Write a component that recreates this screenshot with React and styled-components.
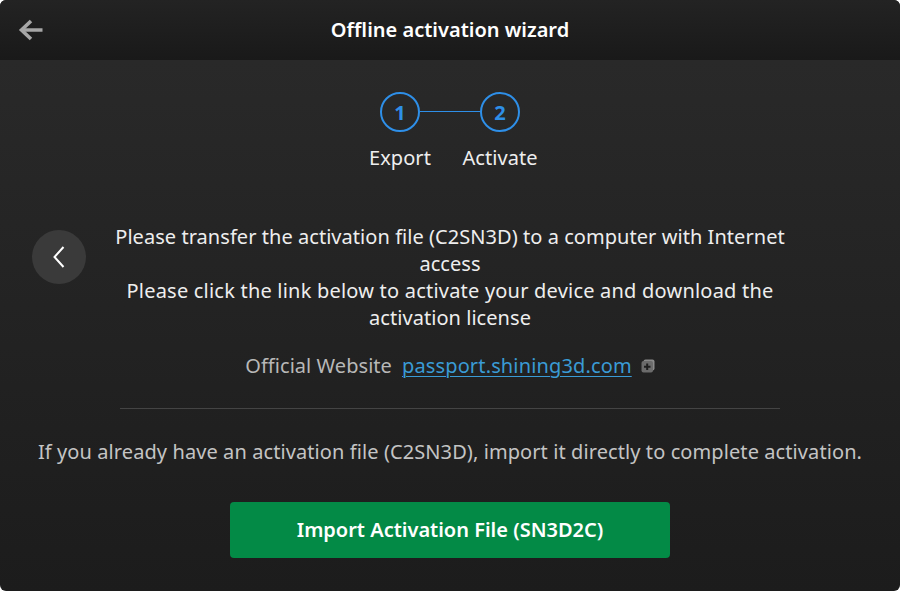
import React from 'react'
import styled, { createGlobalStyle } from 'styled-components'

const GlobalStyle = createGlobalStyle`
  html, body {
    margin: 0;
    padding: 0;
    background: #ffffff;
  }
  body {
    font-family: "Noto Sans", "Open Sans", sans-serif;
  }
`

const Panel = styled.div`
  width: 900px;
  height: 591px;
  border-radius: 6px;
  overflow: hidden;
  display: flex;
  flex-direction: column;
  background: linear-gradient(180deg, #292929 60px, #1c1c1c 100%);
`

const Header = styled.header`
  height: 60px;
  flex: none;
  box-sizing: border-box;
  padding-bottom: 2px;
  display: flex;
  align-items: center;
  justify-content: center;
  position: relative;
  background: linear-gradient(180deg, #232323 0%, #191919 100%);
`

const Title = styled.h1`
  margin: 0;
  font-size: 20px;
  font-weight: 600;
  color: #ffffff;
`

const BackArrow = styled.button`
  position: absolute;
  left: 18px;
  top: 18px;
  width: 26px;
  height: 24px;
  padding: 0;
  border: 0;
  background: none;
  display: flex;
`

const Steps = styled.div`
  display: flex;
  justify-content: center;
  margin-top: 32px;
  height: 100px;
`

const Step = styled.div`
  width: 100px;
  display: flex;
  flex-direction: column;
  align-items: center;
  position: relative;
`

const StepCircle = styled.div`
  width: 40px;
  height: 40px;
  box-sizing: border-box;
  border: 2px solid #2e8fe8;
  border-radius: 50%;
  display: flex;
  align-items: center;
  justify-content: center;
  font-size: 20px;
  font-weight: 700;
  color: #2e8fe8;
`

const StepLink = styled.div`
  position: absolute;
  left: 70px;
  top: 19px;
  width: 60px;
  height: 1px;
  background: #2e8fe8;
`

const StepLabel = styled.div`
  margin-top: 12px;
  font-size: 20px;
  line-height: 27px;
  letter-spacing: 0.05px;
  color: #eeeeee;
  white-space: nowrap;
`

const Body = styled.div`
  display: flex;
  align-items: flex-start;
  padding: 31px 0 0 32px;
`

const RoundButton = styled.button`
  width: 54px;
  height: 54px;
  flex: none;
  margin-top: 7px;
  padding: 0;
  border: 0;
  border-radius: 50%;
  background: #3a3a3a;
  display: flex;
  align-items: center;
  justify-content: center;
`

const Message = styled.div`
  width: 700px;
  margin-left: 14px;
  text-align: center;
  font-size: 20px;
  line-height: 27px;
  letter-spacing: 0.05px;
  color: #eeeeee;
`

const WideLine = styled.span`
  letter-spacing: 0.21px;
`

const LastWords = styled.span`
  letter-spacing: 0.05px;
`

const WebsiteRow = styled.div`
  display: flex;
  justify-content: center;
  align-items: center;
  margin-top: 21px;
  height: 27px;
  font-size: 20px;
  color: #b8b8b8;
`

const SiteLink = styled.a`
  margin-left: 10px;
  color: #3a9bd5;
  text-decoration: underline;
  text-underline-offset: 3px;
  text-decoration-thickness: 1px;
  letter-spacing: 0.14px;
`

const CopyIcon = styled.svg`
  margin-left: 9px;
  flex: none;
`

const Divider = styled.div`
  width: 660px;
  height: 1px;
  margin: 29px auto 0;
  background: #444444;
`

const Hint = styled.p`
  margin: 29px 0 0;
  text-align: center;
  font-size: 20px;
  line-height: 27px;
  letter-spacing: 0.09px;
  color: #c4c4c4;
`

const ImportButton = styled.button`
  display: block;
  width: 440px;
  height: 56px;
  margin: 37px auto 0;
  padding: 0 0 2px;
  border: 0;
  border-radius: 4px;
  background: #038a46;
  color: #ffffff;
  font-family: inherit;
  font-size: 20px;
  font-weight: 600;
`

const steps = [
  { n: 1, label: 'Export' },
  { n: 2, label: 'Activate' }
]

export default function App () {
  return (
    <>
      <GlobalStyle />
      <Panel>
        <Header>
          <BackArrow aria-label='Back'>
            <svg width='26' height='24' viewBox='0 0 26 24' fill='none' stroke='#a6a6a6' strokeWidth='3.6'>
              <path d='M13 3 L3.5 12 L13 21' />
              <path d='M4 12 H24.5' />
            </svg>
          </BackArrow>
          <Title>Offline activation wizard</Title>
        </Header>
        <Steps>
          {steps.map((s, i) => (
            <Step key={s.n}>
              <StepCircle>{s.n}</StepCircle>
              {i === 0 && <StepLink />}
              <StepLabel>{s.label}</StepLabel>
            </Step>
          ))}
        </Steps>
        <Body>
          <RoundButton aria-label='Previous'>
            <svg width='14' height='24' viewBox='0 0 14 24' fill='none' stroke='#ffffff' strokeWidth='2'>
              <path d='M11.5 2 L2.5 12 L11.5 22' />
            </svg>
          </RoundButton>
          <Message>
            Please transfer the activation file (C2SN3D) to a computer with Internet access
            <br />
            <WideLine>Please click the link below to activate your device and download the</WideLine>{' '}
            <LastWords>activation license</LastWords>
            <WebsiteRow>
              Official Website
              <SiteLink>passport.shining3d.com</SiteLink>
              <CopyIcon width='14' height='14' viewBox='0 0 14 14'>
                <rect x='2.5' y='0.5' width='11' height='11' rx='2' fill='#8a8a8a' />
                <rect x='0.5' y='2' width='11.5' height='11.5' rx='2' fill='#6b6b6b' />
                <path d='M6.2 4.5 V11 M3 7.8 H9.5' stroke='#1f1f1f' strokeWidth='2' />
              </CopyIcon>
            </WebsiteRow>
          </Message>
        </Body>
        <Divider />
        <Hint>If you already have an activation file (C2SN3D), import it directly to complete activation.</Hint>
        <ImportButton>Import Activation File (SN3D2C)</ImportButton>
      </Panel>
    </>
  )
}
